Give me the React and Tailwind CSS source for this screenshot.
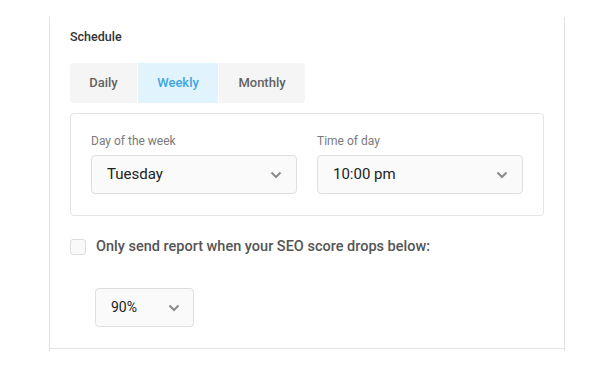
import React, { useState } from "react";

function Chevron() {
  return (
    <svg width="12" height="8" viewBox="0 0 12 8" fill="none">
      <path d="M1.5 1.5L6 6L10.5 1.5" stroke="#8a8a8a" strokeWidth="2" />
    </svg>
  );
}

function Select({ value, className }) {
  return (
    <div
      className={
        "h-[39px] flex items-center justify-between bg-[#fafafa] border border-[#dedede] rounded-[4px] " +
        className
      }
    >
      <span>{value}</span>
      <Chevron />
    </div>
  );
}

export default function App() {
  const [tab, setTab] = useState("Weekly");
  const [checked, setChecked] = useState(false);
  const tabs = ["Daily", "Weekly", "Monthly"];

  return (
    <div className="w-[610px] h-[379px] bg-white font-['Roboto',sans-serif] pt-[17px] pl-[49px]">
      <div className="w-[516px] h-[334px] border-x border-[#e2e2e2]">
        <div className="h-[332px] border-b border-[#e2e2e2] px-[20px] pt-[12px]">
          <div className="text-[12.5px] leading-[16px] font-medium text-[#333]">Schedule</div>

          {/* tabs */}
          <div className="mt-[18px] flex w-fit rounded-[4px] overflow-hidden">
            {tabs.map((t) => (
              <button
                key={t}
                onClick={() => setTab(t)}
                className={
                  "h-[40px] text-[13px] font-medium border-r border-white last:border-r-0 " +
                  (t === "Daily" ? "w-[68px] " : t === "Weekly" ? "w-[81px] " : "w-[86px] ") +
                  (tab === t ? "bg-[#e1f4fd] text-[#3ea6e3]" : "bg-[#f5f5f5] text-[#636363]")
                }
              >
                {t}
              </button>
            ))}
          </div>

          {/* day / time box */}
          <div className="mt-[10px] h-[103px] border border-[#e4e4e4] rounded-[4px] px-[20px] pt-[19px] flex gap-[20px]">
            <div className="w-[206px]">
              <div className="text-[12px] leading-[16px] text-[#7a7a7a] mb-[6px]">Day of the week</div>
              <Select value="Tuesday" className="pl-[15px] pr-[14px] text-[15px] text-[#222]" />
            </div>
            <div className="w-[206px]">
              <div className="text-[12px] leading-[16px] text-[#7a7a7a] mb-[6px]">Time of day</div>
              <Select value="10:00 pm" className="pl-[15px] pr-[14px] text-[15px] text-[#222]" />
            </div>
          </div>

          {/* threshold */}
          <label className="mt-[23px] flex items-center gap-[10px] cursor-pointer">
            <span
              onClick={() => setChecked(!checked)}
              className={
                "w-[16px] h-[16px] rounded-[3px] border border-[#dcdcdc] " +
                (checked ? "bg-[#3ea6e3]" : "bg-[#f9f9f9]")
              }
            />
            <span className="text-[14.5px] leading-[16px] font-medium text-[#555]">
              Only send report when your SEO score drops below:
            </span>
          </label>

          <div className="mt-[33px] ml-[25px]">
            <Select value="90%" className="w-[99px] pl-[15px] pr-[13px] text-[14px] text-[#222]" />
          </div>
        </div>
      </div>
    </div>
  );
}
